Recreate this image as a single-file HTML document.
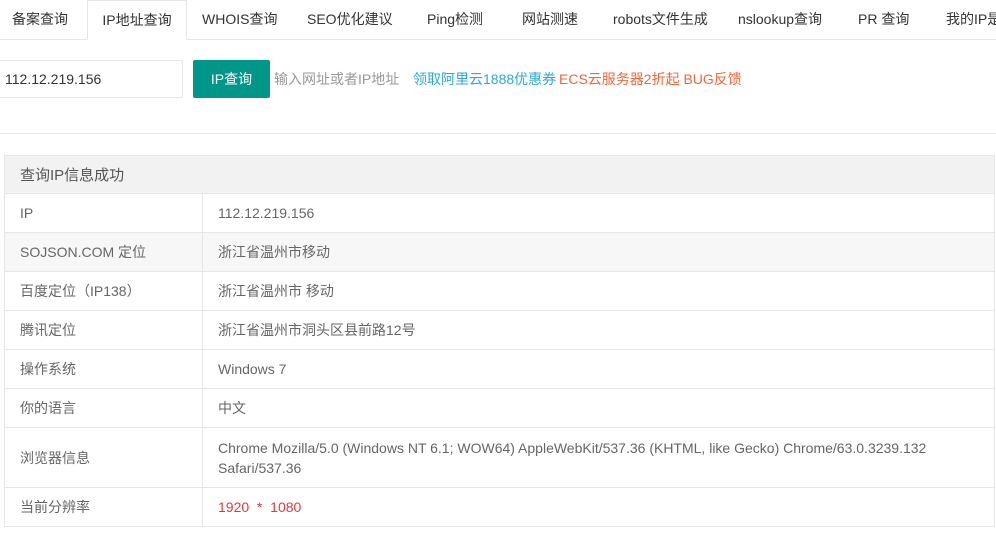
<!DOCTYPE html>
<html><head><meta charset="utf-8"><style>
*{margin:0;padding:0;box-sizing:border-box}
body{width:996px;height:539px;overflow:hidden;background:#fff;font-family:"Liberation Sans","Noto Sans CJK SC",sans-serif;font-size:14px;color:#333;position:relative}
.tabs{position:absolute;left:0;top:0;width:996px;height:40px;border-bottom:1px solid #e6e6e6}
.tab{position:absolute;top:0;height:40px;line-height:38px;white-space:nowrap;color:#333}
.act{left:87px;width:100px;border:1px solid #e6e6e6;border-bottom:1px solid #fff;background:#fff;text-align:center;height:40px}
.inp{position:absolute;left:-2px;top:60px;width:185px;height:38px;border:1px solid #e6e6e6;border-radius:2px;line-height:36px;padding-left:6px;color:#333}
.btn{position:absolute;left:193px;top:60px;width:77px;height:38px;background:#009688;color:#fff;border-radius:2px;text-align:center;line-height:38px}
.hint{position:absolute;left:274px;top:60px;line-height:38px;color:#999;white-space:nowrap}
.l1{position:absolute;left:413px;top:60px;line-height:38px;color:#2ea7e0;white-space:nowrap}
.l2{position:absolute;left:559px;top:60px;line-height:38px;color:#f2673a;white-space:nowrap}
.hr{position:absolute;left:0;top:133px;width:996px;height:1px;background:#e6e6e6}
table{position:absolute;left:4px;top:155px;width:991px;border-collapse:collapse;color:#666}
td,th{border:1px solid #e6e6e6;padding:0 15px;font-weight:normal;text-align:left;vertical-align:middle}
th{background:#f2f2f2;height:38px;font-size:15px;color:#555}
td{height:39px;line-height:20px}
td:first-child{width:198px}
.g td{background:#f7f7f7}
</style></head><body>
<div class="tabs">
<div class="tab" style="left:12px">备案查询</div>
<div class="tab act">IP地址查询</div>
<div class="tab" style="left:202px">WHOIS查询</div>
<div class="tab" style="left:307px">SEO优化建议</div>
<div class="tab" style="left:427px">Ping检测</div>
<div class="tab" style="left:522px">网站测速</div>
<div class="tab" style="left:613px">robots文件生成</div>
<div class="tab" style="left:738px">nslookup查询</div>
<div class="tab" style="left:858px">PR 查询</div>
<div class="tab" style="left:946px">我的IP是</div>
</div>
<div class="inp">112.12.219.156</div>
<div class="btn">IP查询</div>
<div class="hint">输入网址或者IP地址</div>
<div class="l1">领取阿里云1888优惠券</div>
<div class="l2">ECS云服务器2折起 BUG反馈</div>
<div class="hr"></div>
<table>
<tr><th colspan="2">查询IP信息成功</th></tr>
<tr><td>IP</td><td>112.12.219.156</td></tr>
<tr class="g"><td>SOJSON.COM 定位</td><td>浙江省温州市移动</td></tr>
<tr><td>百度定位（IP138）</td><td>浙江省温州市 移动</td></tr>
<tr><td>腾讯定位</td><td>浙江省温州市洞头区县前路12号</td></tr>
<tr><td>操作系统</td><td>Windows 7</td></tr>
<tr><td>你的语言</td><td>中文</td></tr>
<tr><td style="height:60px">浏览器信息</td><td>Chrome Mozilla/5.0 (Windows NT 6.1; WOW64) AppleWebKit/537.36 (KHTML, like Gecko) Chrome/63.0.3239.132 Safari/537.36</td></tr>
<tr><td>当前分辨率</td><td style="color:#e4393c">1920 &nbsp;*&nbsp; 1080</td></tr>
</table>
</body></html>
